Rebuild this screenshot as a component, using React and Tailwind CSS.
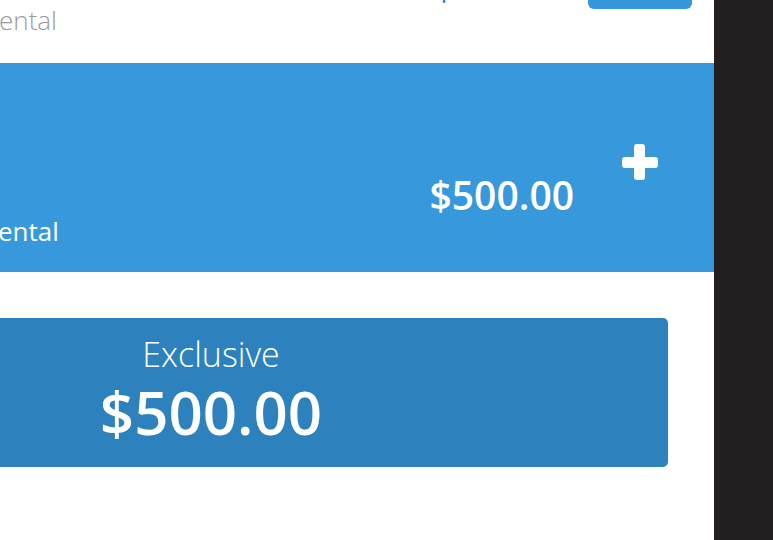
export default function App() {
  return (
    <div className="w-[773px] h-[540px] flex overflow-hidden bg-white" style={{ fontFamily: '"Open Sans", "Noto Sans", sans-serif' }}>
      <div className="w-[714px] h-full flex flex-col bg-white overflow-hidden">
        {/* top row */}
        <div className="h-[63px] shrink-0 flex justify-between items-start overflow-hidden">
          <div className="mt-[2px] ml-[-1px] text-[26px] leading-[36px] font-light text-[#9b9b9b]">ental</div>
          <div className="flex items-start pr-[22px]">
            <div className="mt-[-31px] text-[36px] leading-[36px] font-semibold text-[#2f80c2]">$500.00</div>
            <div className="ml-[21px] mt-[-11px] w-[104px] h-[20px] rounded-md bg-[#3896da]" />
          </div>
        </div>

        {/* blue band */}
        <div className="h-[209px] shrink-0 bg-[#3799db] flex justify-between items-start text-white">
          <div className="pt-[150px] ml-[-2px] text-[26px] leading-[36px]">ental</div>
          <div className="flex items-start pr-[56px]">
            <div className="mt-[105px] text-[39px] leading-[53px] font-semibold">$500.00</div>
            <svg className="mt-[81px] ml-[48px]" width="36" height="36" viewBox="0 0 36 36" fill="white">
              <rect x="0" y="13" width="36" height="11" rx="3" />
              <rect x="12" y="0" width="11" height="36" rx="3" />
            </svg>
          </div>
        </div>

        {/* exclusive card */}
        <div className="mt-[46px] w-[668px] h-[149px] shrink-0 rounded-r-[5px] bg-[#2d81bd] text-white flex">
          <div className="w-[422px] flex flex-col items-center pt-[16px]">
            <div className="text-[34px] leading-[40px] font-light">Exclusive</div>
            <div className="mt-[6px] text-[60px] leading-[64px] font-semibold">$500.00</div>
          </div>
        </div>
      </div>
      <div className="w-[59px] h-full bg-[#231f20]" />
    </div>
  );
}
